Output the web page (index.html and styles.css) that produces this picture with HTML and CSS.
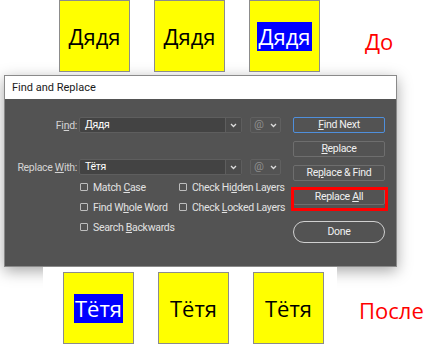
FILE: index.html
```html
<!DOCTYPE html>
<html lang="ru">
<head>
    <meta charset="UTF-8">
    <title>Find and Replace</title>
    <link rel="stylesheet" href="styles.css">
</head>
<body>
    <div class="strip strip-top">
        <div class="tile"><span>Дядя</span></div>
        <div class="tile"><span>Дядя</span></div>
        <div class="tile"><span class="sel">Дядя</span></div>
        <div class="caption caption-top">До</div>
    </div>

    <div class="dialog">
        <div class="dialog-title">Find and Replace</div>
        <div class="dialog-body">
            <div class="form">
                <div class="field-row">
                    <label class="field-label">Fi<u>n</u>d:</label>
                    <div class="combo">
                        <span class="combo-text">Дядя</span>
                        <span class="combo-arrow"><svg width="7" height="5" viewBox="0 0 7 5"><path d="M1 1l2.5 2.5L6 1" fill="none" stroke="#dcdcdc" stroke-width="1.3"/></svg></span>
                    </div>
                    <div class="special">
                        <span class="at">@</span>
                        <svg width="7" height="5" viewBox="0 0 7 5"><path d="M1 1l2.5 2.5L6 1" fill="none" stroke="#dcdcdc" stroke-width="1.3"/></svg>
                    </div>
                </div>
                <div class="field-row">
                    <label class="field-label">Replace <u>W</u>ith:</label>
                    <div class="combo">
                        <span class="combo-text">Тётя</span>
                        <span class="combo-arrow"><svg width="7" height="5" viewBox="0 0 7 5"><path d="M1 1l2.5 2.5L6 1" fill="none" stroke="#dcdcdc" stroke-width="1.3"/></svg></span>
                    </div>
                    <div class="special">
                        <span class="at">@</span>
                        <svg width="7" height="5" viewBox="0 0 7 5"><path d="M1 1l2.5 2.5L6 1" fill="none" stroke="#dcdcdc" stroke-width="1.3"/></svg>
                    </div>
                </div>
                <div class="options">
                    <div class="check"><span class="box"></span><span>Match <u>C</u>ase</span></div>
                    <div class="check"><span class="box"></span><span>Check Hi<u>d</u>den Layers</span></div>
                    <div class="check"><span class="box"></span><span>Find W<u>h</u>ole Word</span></div>
                    <div class="check"><span class="box"></span><span>Check <u>L</u>ocked Layers</span></div>
                    <div class="check"><span class="box"></span><span>Search <u>B</u>ackwards</span></div>
                </div>
            </div>
            <div class="buttons">
                <div class="btn primary"><u>F</u>ind Next</div>
                <div class="btn"><u>R</u>eplace</div>
                <div class="btn">Re<u>p</u>lace &amp; Find</div>
                <div class="highlight-wrap">
                    <div class="btn">Replace <u>A</u>ll</div>
                    <div class="highlight"></div>
                </div>
                <div class="btn done">Done</div>
            </div>
        </div>
    </div>

    <div class="strip strip-bottom">
        <div class="shot">
            <div class="tile"><span class="sel">Тётя</span></div>
            <div class="tile"><span>Тётя</span></div>
            <div class="tile"><span>Тётя</span></div>
        </div>
        <div class="caption caption-bottom">После</div>
    </div>
</body>
</html>
```

FILE: styles.css
```css
body {
    margin: 0;
    background: #fff;
    font-family: "Open Sans", "Noto Sans", sans-serif;
}
.strip {
    display: flex;
}
.strip-top {
    height: 73px;
    padding-left: 59px;
    gap: 24px;
}
.tile {
    width: 69px;
    height: 70px;
    border: 1px solid #8c8c8c;
    background: #ffff00;
    display: flex;
    align-items: center;
    justify-content: center;
    font-size: 22px;
    color: #000;
}
.sel {
    background: #0000ff;
    color: #fff;
    line-height: 29px;
    padding: 0 1px;
}
.caption {
    color: #ff0000;
    font-size: 22px;
}
.caption-top {
    margin: 26px 0 0 21px;
}
.dialog {
    margin: 2px 0 0 4px;
    width: 391px;
    border: 1px solid #8a8a8a;
    background: #535353;
    box-shadow: 0 4px 14px rgba(0,0,0,0.35);
    font-family: Roboto, sans-serif;
    font-size: 10.5px;
    letter-spacing: -0.3px;
}
.dialog-title {
    height: 23px;
    line-height: 23px;
    padding-left: 7px;
    background: #fff;
    color: #1a1a1a;
    font-size: 11px;
    letter-spacing: 0;
}
.dialog-body {
    height: 167px;
    box-sizing: border-box;
    padding-top: 18px;
    display: flex;
}
.form {
    width: 276px;
}
.field-row {
    display: flex;
    align-items: center;
    height: 16px;
}
.field-row + .field-row {
    margin-top: 26px;
}
.field-label {
    width: 72px;
    margin-right: 2px;
    text-align: right;
    color: #d4d4d4;
}
.combo {
    width: 161px;
    height: 14px;
    border: 1px solid #5e5e5e;
    border-radius: 2px;
    background: #434343;
    display: flex;
}
.combo-text {
    flex: 1;
    padding-left: 5px;
    line-height: 14px;
    color: #fff;
}
.combo-arrow {
    width: 15px;
    border-left: 1px solid #5e5e5e;
    background: #4b4b4b;
    display: flex;
    align-items: center;
    justify-content: center;
}
.special {
    margin-left: 8px;
    width: 29px;
    height: 14px;
    border: 1px solid #606060;
    border-radius: 2px;
    display: flex;
    align-items: center;
    justify-content: space-around;
}
.at {
    color: #8f8f8f;
    font-size: 11px;
    line-height: 14px;
}
.options {
    display: grid;
    grid-template-columns: 99px auto;
    grid-auto-rows: 20px;
    margin: 2px 0 0 75px;
}
.check {
    display: flex;
    align-items: center;
    gap: 5px;
    color: #e2e2e2;
    white-space: nowrap;
}
.box {
    flex-shrink: 0;
    width: 6px;
    height: 6px;
    border: 1px solid #bdbdbd;
    border-radius: 1px;
}
.buttons {
    width: 92px;
    margin-left: 12px;
    display: flex;
    flex-direction: column;
    gap: 8px;
}
.btn {
    height: 16px;
    box-sizing: border-box;
    border: 1px solid #6e6e6e;
    border-radius: 2px;
    color: #f0f0f0;
    text-align: center;
    line-height: 14px;
}
.btn.primary {
    border-color: #4f8fdc;
}
.btn.done {
    height: 22px;
    margin-top: 8px;
    border-radius: 11px;
    border-color: #d0d0d0;
    line-height: 20px;
}
.highlight-wrap {
    position: relative;
}
.highlight {
    position: absolute;
    left: -2px;
    right: -3px;
    top: -2px;
    bottom: -6px;
    border: 3px solid #ff0000;
}
.strip-bottom {
    align-items: center;
}
.shot {
    position: relative;
    z-index: 1;
    margin-left: 43px;
    width: 294px;
    height: 79px;
    padding: 5px 0 0 20px;
    box-sizing: border-box;
    background: #fff;
    display: flex;
    gap: 24px;
}
.caption-bottom {
    margin: 6px 0 0 22px;
}
```
